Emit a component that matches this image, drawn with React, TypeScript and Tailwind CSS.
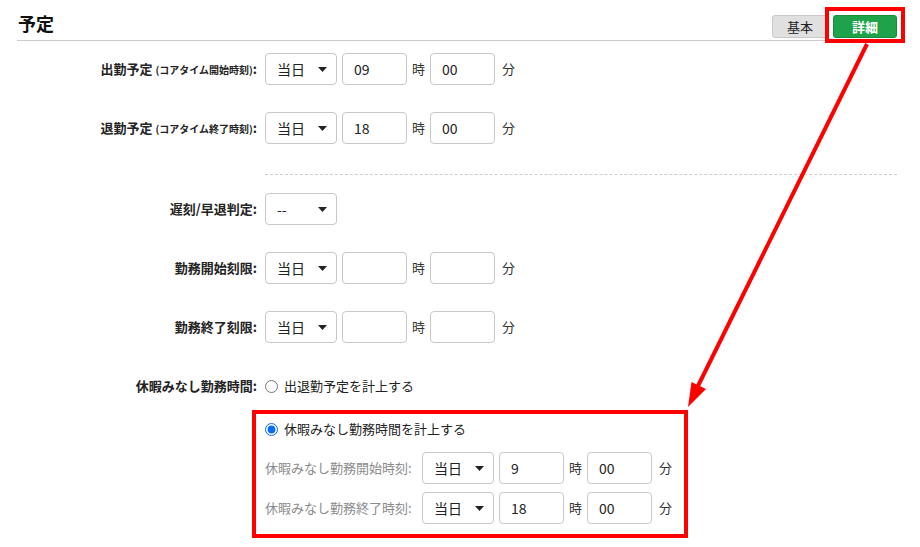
import React from "react";

const font = { fontFamily: '"Noto Sans CJK JP", "Noto Sans", sans-serif' };

function Caret() {
  return (
    <svg width="9" height="5" viewBox="0 0 9 5" className="shrink-0">
      <polygon points="0,0 9,0 4.5,5" fill="#222" />
    </svg>
  );
}

function Select({ value, width = "w-[72px]" }: { value: string; width?: string }) {
  return (
    <div
      className={`${width} h-[32px] rounded-[4px] border border-[#c8c8c8] bg-white flex items-center justify-between pl-[11px] pr-[9px] text-[14px] text-[#222]`}
    >
      <span>{value}</span>
      <Caret />
    </div>
  );
}

function Field({ value }: { value: string }) {
  return (
    <input
      readOnly
      defaultValue={value}
      className="w-[65px] h-[32px] rounded-[4px] border border-[#c8c8c8] bg-white px-[11px] text-[14px] text-[#222] outline-none"
      style={font}
    />
  );
}

function TimeGroup({ day = "当日", h, m }: { day?: string; h: string; m: string }) {
  return (
    <div className="flex items-center">
      <Select value={day} />
      <div className="ml-[5px]">
        <Field value={h} />
      </div>
      <span className="mx-[5px] text-[13px] text-[#333]">時</span>
      <Field value={m} />
      <span className="ml-[7px] text-[13px] text-[#333]">分</span>
    </div>
  );
}

function Row({ label, children, className = "" }: { label: React.ReactNode; children: React.ReactNode; className?: string }) {
  return (
    <div className={`flex items-center ${className}`}>
      <div className="w-[257px] text-right text-[13px] font-bold text-[#222]">{label}</div>
      <div className="ml-[8px]">{children}</div>
    </div>
  );
}

export default function App() {
  return (
    <div className="relative w-[920px] h-[547px] bg-white overflow-hidden" style={font}>
      {/* header */}
      <div className="ml-[17px] mr-[23px] h-[41px] border-b border-[#cccccc] flex justify-between">
        <div className="pt-[11px] pl-[1px] text-[18px] leading-[24px] font-bold text-[#111]">予定</div>
        <div className="flex gap-[5px] pt-[15px]">
          <div className="w-[56px] h-[23px] rounded-[3px] border border-[#c8c8c8] bg-[#e0e0e0] flex items-center justify-center text-[13px] text-[#222]">
            基本
          </div>
          <div className="w-[64px] h-[23px] rounded-[3px] bg-[#1fa34a] border border-[#178a3c] flex items-center justify-center text-[13px] font-bold text-white">
            詳細
          </div>
        </div>
      </div>

      {/* form */}
      <div className="flex flex-col">
        <Row
          className="mt-[12px]"
          label={
            <>
              出勤予定 <span className="text-[10px]">(コアタイム開始時刻)</span>:
            </>
          }
        >
          <TimeGroup h="09" m="00" />
        </Row>
        <Row
          className="mt-[27px]"
          label={
            <>
              退勤予定 <span className="text-[10px]">(コアタイム終了時刻)</span>:
            </>
          }
        >
          <TimeGroup h="18" m="00" />
        </Row>

        <div className="ml-[265px] mr-[23px] mt-[30px] border-t border-dashed border-[#cfcfcf]" />

        <Row className="mt-[18px]" label="遅刻/早退判定:">
          <Select value="--" />
        </Row>
        <Row className="mt-[27px]" label="勤務開始刻限:">
          <TimeGroup h="" m="" />
        </Row>
        <Row className="mt-[27px]" label="勤務終了刻限:">
          <TimeGroup h="" m="" />
        </Row>

        <Row className="mt-[33px] h-[20px]" label="休暇みなし勤務時間:">
          <label className="flex items-center gap-[6px] text-[13px] text-[#222]">
            <input type="radio" name="minashi" className="m-0 w-[13px] h-[13px]" />
            出退勤予定を計上する
          </label>
        </Row>

        {/* nested section */}
        <div className="ml-[252px] mt-[14px] w-[436px] h-[128px] border-4 border-[#ff0000] pl-[9px] pt-[5px]">
          <label className="flex items-center gap-[6px] h-[20px] text-[13px] text-[#222]">
            <input type="radio" name="minashi" defaultChecked className="m-0 w-[13px] h-[13px] accent-[#0a6cf0]" />
            休暇みなし勤務時間を計上する
          </label>
          <div className="mt-[13px] flex items-center">
            <span className="w-[157px] text-[13px] text-[#8a8a8a]">休暇みなし勤務開始時刻:</span>
            <TimeGroup h="9" m="00" />
          </div>
          <div className="mt-[8px] flex items-center">
            <span className="w-[157px] text-[13px] text-[#8a8a8a]">休暇みなし勤務終了時刻:</span>
            <TimeGroup h="18" m="00" />
          </div>
        </div>
      </div>

      {/* annotation: box around 詳細 and arrow */}
      <div className="absolute left-[825px] top-[7px] w-[80px] h-[36px] border-4 border-[#ff0000] pointer-events-none" />
      <svg className="absolute inset-0 pointer-events-none" width="920" height="547" viewBox="0 0 920 547">
        <line x1="867" y1="44" x2="697" y2="388" stroke="#ff0000" strokeWidth="4" />
        <polygon points="688,407 706,389 691.5,382" fill="#ff0000" />
      </svg>
    </div>
  );
}
